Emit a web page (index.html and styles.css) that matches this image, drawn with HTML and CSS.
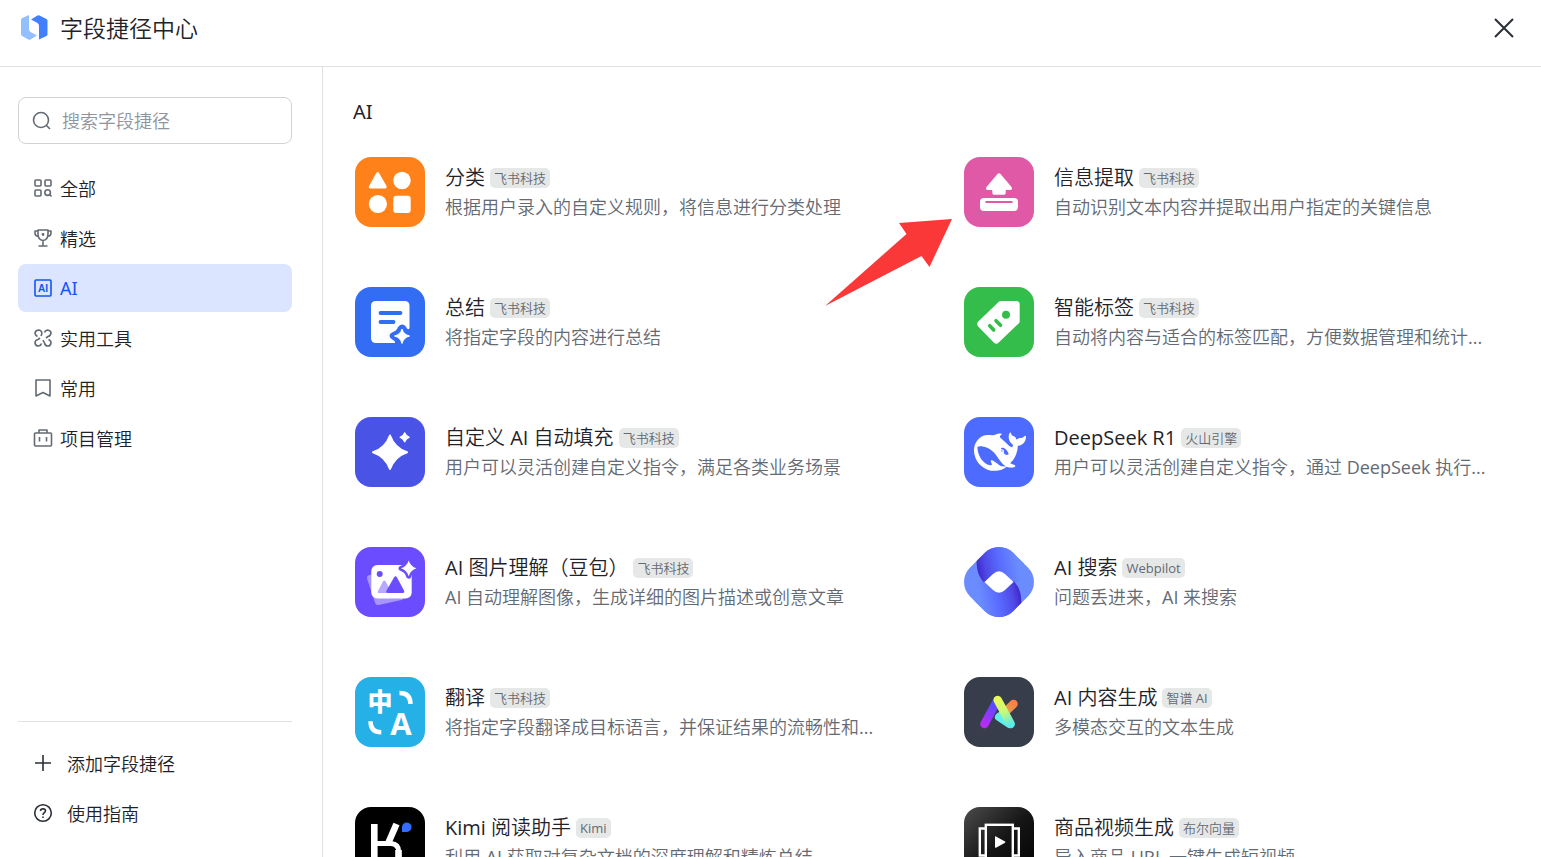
FILE: index.html
```html
<!DOCTYPE html>
<html lang="zh-CN">
<head>
<meta charset="utf-8">
<meta name="viewport" content="width=device-width, initial-scale=1">
<title>字段捷径中心</title>
<link rel="stylesheet" href="styles.css">
</head>
<body>
<div class="app">
  <header class="header">
    <svg class="logo" viewBox="0 0 28 28" aria-hidden="true">
      <path fill="#94bfff" d="M1 6Q1 4.500 2.300 4L9 1V15Q9 17 10.500 18L17 21.500L10.500 25.500Q9.500 26 8.500 25.500L2 22Q1 21.400 1 20Z"/>
      <path fill="#4080ff" d="M11 5.500L17.500 1.500Q18.500 1 19.500 1.500L26.500 5Q27.500 5.600 27.500 7V20Q27.500 21.500 26.500 22L19 25.500V12Q19 10 17.500 9Z"/>
    </svg>
    <h1 class="header-title">字段捷径中心</h1>
    <button class="close" type="button" aria-label="关闭">
      <svg viewBox="0 0 24 24" aria-hidden="true"><path d="M3 3L21 21M21 3L3 21"/></svg>
    </button>
  </header>

  <div class="body">
    <aside class="sidebar">
      <label class="search">
        <svg class="icon" viewBox="0 0 20 20" aria-hidden="true"><circle cx="9" cy="9" r="7.500"/><path d="M14.500 14.500L18 18"/></svg>
        <input class="search-input" type="text" placeholder="搜索字段捷径" aria-label="搜索字段捷径">
      </label>
      <nav class="nav">
        <a class="nav-item" href="#all">
          <svg class="icon" viewBox="0 0 20 20" aria-hidden="true"><rect x="2" y="2" width="6" height="6" rx="1"/><rect x="12" y="2" width="6" height="6" rx="1"/><rect x="2" y="12" width="6" height="6" rx="1"/><circle cx="14.600" cy="14.600" r="2.800"/><path d="M16.600 16.600L18.500 18.500"/></svg>
          全部</a>
        <a class="nav-item" href="#featured">
          <svg class="icon" viewBox="0 0 20 20" aria-hidden="true"><path d="M5 2H15V6Q15 12 10 12.500Q5 12 5 6ZM5 3H2V5Q2 8 5.500 8.500M15 3H18V5Q18 8 14.500 8.500M10 12.500V18M5.500 18H14.500"/><path d="M10 5V8M8.700 6.300H11.300"/></svg>
          精选</a>
        <a class="nav-item nav-item-active" href="#ai" aria-current="page">
          <svg class="icon" viewBox="0 0 20 20" aria-hidden="true"><rect x="2" y="2" width="16" height="16" rx="1"/><text class="icon-letters" x="10" y="14" text-anchor="middle">AI</text></svg>
          AI</a>
        <a class="nav-item" href="#tools">
          <svg class="icon" viewBox="0 0 20 20" aria-hidden="true"><path d="M8 8L9 5.500Q8.500 2 5.300 2Q2 2.500 2 5.500Q2.500 7.500 4.500 8.500M7 10L5 11.500Q2 12 2 15Q2.500 18 5.500 18Q8 17.500 8.500 15.500M11.500 4.500Q12 2.500 14.500 2Q18 2.500 18 5Q17.500 8 15 8.500L13 10M15.500 11.500Q18 12.500 18 15Q17.500 18 15 18Q12 18 11.500 15L10 12"/></svg>
          实用工具</a>
        <a class="nav-item" href="#common">
          <svg class="icon" viewBox="0 0 20 20" aria-hidden="true"><path d="M3 2H17V18L10 14.500L3 18Z"/></svg>
          常用</a>
        <a class="nav-item" href="#projects">
          <svg class="icon" viewBox="0 0 20 20" aria-hidden="true"><rect x="1.500" y="5" width="17" height="13" rx="1"/><path d="M6 5V2H14V5M6.500 9V13.500M13.500 9V13.500"/></svg>
          项目管理</a>
      </nav>
      <div class="sidebar-footer">
        <a class="nav-item nav-item-wide" href="#add">
          <svg class="icon icon-dark" viewBox="0 0 20 20" aria-hidden="true"><path d="M10 2V18M2 10H18"/></svg>
          添加字段捷径</a>
        <a class="nav-item nav-item-wide" href="#guide">
          <svg class="icon icon-dark" viewBox="0 0 20 20" aria-hidden="true"><circle cx="10" cy="10" r="8.300"/><path d="M7.500 8Q7.500 5.700 10 5.700Q12.500 5.800 12.500 8Q12.400 9 11.200 9.800Q10 10.500 10 12"/><path d="M10 13.500V15"/></svg>
          使用指南</a>
      </div>
    </aside>

    <main class="main">
      <h2 class="section-title">AI</h2>
      <div class="grid">
        <article class="card">
          <svg class="app-icon" viewBox="0 0 70 70" aria-hidden="true"><rect width="70" height="70" rx="16" fill="#ff811a"/><g fill="#fff"><path d="M21.300 16Q22.700 14 24.100 16L31.500 29Q32.300 31.300 30 31.500H15.500Q13.200 31.300 14 29Z"/><circle cx="47" cy="23.500" r="8.700"/><circle cx="22.900" cy="47" r="9.100"/><rect x="38.300" y="38.700" width="17.400" height="17.400" rx="3"/></g></svg>
          <div class="card-text"><div class="card-head"><h3 class="card-title">分类</h3><span class="badge">飞书科技</span></div><p class="card-desc">根据用户录入的自定义规则，将信息进行分类处理</p></div>
        </article>

        <article class="card">
          <svg class="app-icon" viewBox="0 0 70 70" aria-hidden="true"><rect width="70" height="70" rx="16" fill="#e059a6"/><path fill="#fff" d="M33.700 16.800Q35 15.500 36.300 16.800L47.500 30Q49 33 46 33H41.700V36Q41.700 37.700 40 37.700H30Q28.300 37.700 28.300 36V33H24Q21 33 22.500 30Z"/><rect x="16" y="41" width="38" height="13" rx="4" fill="#fff"/><path d="M21.500 45H48.500" stroke="#e059a6" stroke-width="2"/></svg>
          <div class="card-text"><div class="card-head"><h3 class="card-title">信息提取</h3><span class="badge">飞书科技</span></div><p class="card-desc">自动识别文本内容并提取出用户指定的关键信息</p></div>
          <svg class="pointer" viewBox="0 0 128 88" aria-hidden="true"><path fill="#fb3838" d="M127 0L74 4L81.500 15L0 87L96.500 37L104.500 48Z"/></svg>
        </article>

        <article class="card">
          <svg class="app-icon" viewBox="0 0 70 70" aria-hidden="true"><rect width="70" height="70" rx="16" fill="#336df4"/><path fill="#fff" d="M21 14H49.500Q54.500 14 54.500 19V41Q54 43 52 41.500Q50 37.500 47 37.500Q43.500 38 42 42Q41 44 38 45Q34.500 46.500 34.500 49Q34.700 51.500 38 53Q40.500 54 40 56H21Q16 56 16 51V19Q16 14 21 14Z"/><path d="M25.500 26H45.500M25.500 35H38.500" stroke="#336df4" stroke-width="3.800" stroke-linecap="round"/><path fill="#fff" stroke="#fff" stroke-linejoin="round" d="M47 42Q48.500 47.500 54.500 49Q48.500 50.500 47 56.500Q45.500 50.500 39.500 49Q45.500 47.500 47 42Z"/></svg>
          <div class="card-text"><div class="card-head"><h3 class="card-title">总结</h3><span class="badge">飞书科技</span></div><p class="card-desc">将指定字段的内容进行总结</p></div>
        </article>

        <article class="card">
          <svg class="app-icon" viewBox="0 0 70 70" aria-hidden="true"><rect width="70" height="70" rx="16" fill="#35bd4b"/><path fill="#fff" stroke="#fff" stroke-width="7" stroke-linejoin="round" d="M37 17.500H52.200V34L32.300 53L16.700 37Z"/><circle cx="42" cy="27.700" r="4" fill="#35bd4b"/><path d="M25.700 38.700L29.700 43M32 33.700L36.500 38.300" stroke="#35bd4b" stroke-width="3.600" stroke-linecap="round"/></svg>
          <div class="card-text"><div class="card-head"><h3 class="card-title">智能标签</h3><span class="badge">飞书科技</span></div><p class="card-desc">自动将内容与适合的标签匹配，方便数据管理和统计...</p></div>
        </article>

        <article class="card">
          <svg class="app-icon" viewBox="0 0 70 70" aria-hidden="true"><rect width="70" height="70" rx="16" fill="#4954e6"/><g fill="#fff" stroke="#fff" stroke-linejoin="round"><path stroke-width="2" d="M35 18.500Q39.500 31 52 35.300Q39.500 39.500 35 52Q30.500 39.500 18 35.300Q30.500 31 35 18.500Z"/><path stroke-width="1" d="M49.700 15.500Q51 19 54.500 20.300Q51 21.600 49.700 25.200Q48.400 21.600 44.800 20.300Q48.400 19 49.700 15.500Z"/></g></svg>
          <div class="card-text"><div class="card-head"><h3 class="card-title">自定义 AI 自动填充</h3><span class="badge">飞书科技</span></div><p class="card-desc">用户可以灵活创建自定义指令，满足各类业务场景</p></div>
        </article>

        <article class="card">
          <svg class="app-icon" viewBox="0 0 70 70" aria-hidden="true"><rect width="70" height="70" rx="16" fill="#4d6bfe"/><path fill="#fff" transform="translate(10 9) scale(2.170)" d="M23.748 4.482c-.254-.124-.364.113-.512.234-.051.039-.094.09-.137.136-.372.397-.806.657-1.373.626-.829-.046-1.537.214-2.163.848-.133-.782-.575-1.248-1.247-1.548-.352-.156-.708-.311-.955-.65-.172-.241-.219-.51-.305-.774-.055-.16-.11-.323-.293-.35-.2-.031-.278.136-.356.276-.313.572-.434 1.202-.422 1.84.027 1.436.633 2.58 1.838 3.393.137.093.172.187.129.323-.082.28-.18.552-.266.833-.055.179-.137.217-.329.14a5.526 5.526 0 01-1.736-1.18c-.857-.828-1.631-1.742-2.597-2.458a11.365 11.365 0 00-.689-.471c-.985-.957.13-1.743.388-1.836.27-.098.093-.432-.779-.428-.872.004-1.67.295-2.687.684a3.055 3.055 0 01-.465.137 9.597 9.597 0 00-2.883-.102c-1.885.21-3.39 1.102-4.497 2.623C.082 8.606-.231 10.684.152 12.85c.403 2.284 1.569 4.175 3.36 5.653 1.858 1.533 3.997 2.284 6.438 2.14 1.482-.085 3.133-.284 4.994-1.86.47.234.962.327 1.78.397.63.059 1.236-.03 1.705-.128.735-.156.684-.837.419-.961-2.155-1.004-1.682-.595-2.113-.926 1.096-1.296 2.746-2.642 3.392-7.003.05-.347.007-.565 0-.845-.004-.17.035-.237.23-.256a4.173 4.173 0 001.545-.475c1.396-.763 1.96-2.015 2.093-3.517.02-.23-.004-.467-.247-.588zM11.581 18c-2.089-1.642-3.102-2.183-3.52-2.16-.392.024-.321.471-.235.763.09.288.207.486.371.739.114.167.192.416-.113.603-.673.416-1.842-.14-1.897-.167-1.361-.802-2.5-1.86-3.301-3.307-.774-1.393-1.224-2.887-1.298-4.482-.02-.386.093-.522.477-.592a4.696 4.696 0 011.529-.039c2.132.312 3.946 1.265 5.468 2.774.868.86 1.525 1.887 2.202 2.891.72 1.066 1.494 2.082 2.48 2.914.348.292.625.514.891.677-.802.09-2.14.11-3.054-.614zm1-6.44a.306.306 0 01.415-.287.302.302 0 01.2.288.306.306 0 01-.31.307.303.303 0 01-.304-.308zm3.11 1.596c-.2.081-.399.151-.59.16a1.245 1.245 0 01-.798-.254c-.274-.23-.47-.358-.552-.758a1.73 1.73 0 01.016-.588c.07-.327-.008-.537-.239-.727-.187-.156-.426-.199-.688-.199a.559.559 0 01-.254-.078c-.11-.054-.2-.19-.114-.358.028-.054.16-.186.192-.21.356-.202.767-.136 1.146.016.352.144.618.408 1.001.782.391.451.462.576.685.914.176.265.336.537.445.848.067.195-.019.354-.25.452z"/></svg>
          <div class="card-text"><div class="card-head"><h3 class="card-title">DeepSeek R1</h3><span class="badge">火山引擎</span></div><p class="card-desc">用户可以灵活创建自定义指令，通过 DeepSeek 执行...</p></div>
        </article>

        <article class="card">
          <svg class="app-icon" viewBox="0 0 70 70" aria-hidden="true"><rect width="70" height="70" rx="16" fill="#6b4dff"/><path fill="#a894ff" stroke="#a894ff" stroke-width="6" stroke-linejoin="round" d="M15 31L23 55L46 50L40 26Z"/><rect x="16.300" y="18" width="40.400" height="33.500" rx="6" fill="#fff"/><rect x="21" y="22.500" width="31" height="24" rx="2" fill="#fff"/><circle cx="24.700" cy="27" r="3" fill="#6b4dff"/><path fill="#b8a8ff" d="M23 44L28 34.500Q29.300 32.500 30.600 34.500L37 46H24Q22 46 23 44Z"/><path fill="#6b4dff" d="M31.500 43.500L39 30.500Q40.500 28 42 30.500L49 43.500Q50 46 47.500 46H33Q30.500 46 31.500 43.500Z"/><path fill="#fff" stroke="#6b4dff" stroke-width="5" stroke-linejoin="round" paint-order="stroke" d="M53.700 13.500Q55.500 19.500 61.500 21.300Q55.500 23.100 53.700 29.200Q51.900 23.100 46 21.300Q51.900 19.500 53.700 13.500Z"/></svg>
          <div class="card-text"><div class="card-head"><h3 class="card-title">AI 图片理解（豆包）</h3><span class="badge">飞书科技</span></div><p class="card-desc">AI 自动理解图像，生成详细的图片描述或创意文章</p></div>
        </article>

        <article class="card">
          <svg class="app-icon" viewBox="0 0 70 70" aria-hidden="true"><defs><linearGradient id="swirl" gradientUnits="userSpaceOnUse" x1="12" y1="26" x2="54" y2="18"><stop offset="0" stop-color="#3d1fc4"/><stop offset=".25" stop-color="#4f4be8"/><stop offset=".6" stop-color="#5a6cff"/><stop offset="1" stop-color="#6a8cff"/></linearGradient><clipPath id="diamond"><rect x="4.400" y="4.400" width="61.200" height="61.200" rx="20" transform="rotate(45 35 35)"/></clipPath></defs><g clip-path="url(#diamond)"><rect width="70" height="70" fill="#6a8cff"/><path id="swirl-half" fill="url(#swirl)" d="M12.700 10C12 24 15 30 20.300 36L49.500 35L60 35L60 0H12.700Z"/><use href="#swirl-half" transform="rotate(180 35 35)"/><path fill="#fff" d="M20.500 35L29 27Q35 21.500 41 27L49.500 35L41 43Q35 48.500 29 43Z"/></g></svg>
          <div class="card-text"><div class="card-head"><h3 class="card-title">AI 搜索</h3><span class="badge">Webpilot</span></div><p class="card-desc">问题丢进来，AI 来搜索</p></div>
        </article>

        <article class="card">
          <svg class="app-icon" viewBox="0 0 70 70" aria-hidden="true"><rect width="70" height="70" rx="16" fill="#26b0e8"/><text class="glyph-cjk" x="25" y="34" text-anchor="middle">中</text><text class="glyph-latin" x="46" y="58" text-anchor="middle">A</text><path fill="none" stroke="#fff" stroke-width="4.500" d="M44.500 16Q55.500 16 55.500 27M15.500 44.300Q15.500 55.300 26.300 55.300"/></svg>
          <div class="card-text"><div class="card-head"><h3 class="card-title">翻译</h3><span class="badge">飞书科技</span></div><p class="card-desc">将指定字段翻译成目标语言，并保证结果的流畅性和...</p></div>
        </article>

        <article class="card">
          <svg class="app-icon" viewBox="0 0 70 70" aria-hidden="true"><defs><linearGradient id="bar-violet" gradientUnits="userSpaceOnUse" x1="21" y1="47" x2="34" y2="22"><stop offset="0" stop-color="#b52cf5"/><stop offset="1" stop-color="#3a55ff"/></linearGradient><linearGradient id="bar-orange" gradientUnits="userSpaceOnUse" x1="50" y1="26" x2="36" y2="40"><stop offset="0" stop-color="#ff7f45"/><stop offset=".6" stop-color="#e0a050"/><stop offset="1" stop-color="#62e8ee"/></linearGradient><linearGradient id="bar-lime" gradientUnits="userSpaceOnUse" x1="34" y1="22" x2="47" y2="48"><stop offset="0" stop-color="#e8fb5a"/><stop offset=".5" stop-color="#c9f77c"/><stop offset="1" stop-color="#55ecec"/></linearGradient></defs><rect width="70" height="70" rx="16" fill="#373d4a"/><g fill="none" stroke-width="8.500" stroke-linecap="round"><path stroke="url(#bar-violet)" d="M20.500 47L33 24"/><path stroke="url(#bar-orange)" d="M49.500 27L37 39"/></g><path fill="#5ff0ee" d="M31 39Q32 36 36 35L48 50Q46 52 43.500 50.500L33 43.500Q30 41.500 31 39Z"/><path fill="none" stroke="url(#bar-lime)" stroke-width="8.500" stroke-linecap="round" d="M33.700 23L46.700 47"/></svg>
          <div class="card-text"><div class="card-head"><h3 class="card-title">AI 内容生成</h3><span class="badge">智谱 AI</span></div><p class="card-desc">多模态交互的文本生成</p></div>
        </article>

        <article class="card">
          <svg class="app-icon" viewBox="0 0 70 70" aria-hidden="true"><rect width="70" height="70" rx="16" fill="#000"/><g fill="none" stroke="#fff" stroke-width="6.600"><path d="M19.300 17V58"/><path d="M41.500 17L33.500 35.500"/><path stroke-width="5" d="M20 36.500H36Q43.800 37 43.800 45V58"/><path d="M43.500 43V58"/></g><path fill="#336dff" d="M47 25V20A4.800 4.800 0 1 1 51.800 25Z"/></svg>
          <div class="card-text"><div class="card-head"><h3 class="card-title">Kimi 阅读助手</h3><span class="badge">Kimi</span></div><p class="card-desc">利用 AI 获取对复杂文档的深度理解和精炼总结</p></div>
        </article>

        <article class="card">
          <svg class="app-icon" viewBox="0 0 70 70" aria-hidden="true"><defs><linearGradient id="film" x1="0" y1="0" x2="1" y2="1"><stop offset="0" stop-color="#4c4c4e"/><stop offset=".5" stop-color="#161616"/><stop offset="1" stop-color="#000"/></linearGradient></defs><rect width="70" height="70" rx="16" fill="url(#film)"/><g fill="none" stroke="#fff" stroke-width="2.400"><rect x="21.800" y="17.800" width="27" height="34.500"/><path d="M21.800 21.500H15.800V48.500H21.800M48.800 21.500H54.800V48.500H48.800"/></g><path fill="#fff" d="M31 30Q31 29 32 29.500L41 34.500Q42 35 41 35.700L32 40.700Q31 41 31 40Z"/></svg>
          <div class="card-text"><div class="card-head"><h3 class="card-title">商品视频生成</h3><span class="badge">布尔向量</span></div><p class="card-desc">导入商品 URL 一键生成短视频</p></div>
        </article>
      </div>
    </main>
  </div>
</div>
</body>
</html>
```

FILE: styles.css
```css
* {
  box-sizing: border-box;
}

body {
  margin: 0;
  background: #fff;
  color: #1f2329;
  font-family: "Open Sans", "Noto Sans CJK SC DemiLight", "Noto Sans CJK SC", sans-serif;
  font-size: 18px;
  font-weight: 400;
}

h1,
h2,
h3,
p {
  margin: 0;
  font-weight: 400;
}

svg {
  display: block;
  flex: none;
}

.app {
  display: flex;
  flex-direction: column;
  height: 100vh;
}

.header {
  display: flex;
  align-items: center;
  gap: 12px;
  padding: 11px 25px 21px 20px;
  border-bottom: 1px solid #dee0e3;
}

.logo {
  width: 28px;
  height: 28px;
}

.header-title {
  flex: 1;
  font-size: 23px;
  line-height: 34px;
}

.close {
  padding: 0;
  border: 0;
  background: none;
  cursor: pointer;
}

.close svg {
  width: 24px;
  height: 24px;
  fill: none;
  stroke: #2b2f36;
  stroke-width: 2;
}

.body {
  display: flex;
  flex: 1;
  min-height: 0;
}

.sidebar {
  display: flex;
  flex: none;
  flex-direction: column;
  width: 323px;
  padding: 30px 30px 20px 18px;
  border-right: 1px solid #dee0e3;
}

.search {
  display: flex;
  align-items: center;
  gap: 10px;
  padding: 0 13px;
  border: 1px solid #d0d3d6;
  border-radius: 8px;
}

.search-input {
  flex: 1;
  min-width: 0;
  height: 45px;
  padding: 0;
  border: 0;
  outline: 0;
  background: none;
  color: inherit;
  font: inherit;
}

.search-input::placeholder {
  color: #8f959e;
  opacity: 1;
}

.icon {
  width: 20px;
  height: 20px;
  fill: none;
  stroke: #646a73;
  stroke-width: 1.600;
  stroke-linejoin: round;
}

.icon-dark {
  stroke: #2b2f36;
}

.icon-letters {
  fill: #1456f0;
  stroke: none;
  font-family: "Liberation Sans", sans-serif;
  font-size: 10px;
  font-weight: 700;
}

.nav {
  display: flex;
  flex: 1;
  flex-direction: column;
  gap: 2px;
  margin-top: 20px;
}

.nav-item {
  display: flex;
  align-items: center;
  gap: 7px;
  height: 48px;
  padding: 0 15px;
  border-radius: 8px;
  color: #1f2329;
  text-decoration: none;
}

.nav-item-wide {
  gap: 14px;
}

.nav-item-active {
  background: #dbe5ff;
  color: #1456f0;
  font-family: "Noto Sans", sans-serif;
}

.nav-item-active .icon {
  stroke: #1456f0;
}

.sidebar-footer {
  display: flex;
  flex-direction: column;
  gap: 2px;
  padding-top: 17px;
  border-top: 1px solid #dee0e3;
}

.main {
  flex: 1;
  min-width: 0;
  overflow-y: auto;
  scrollbar-width: none;
}

.section-title {
  padding: 30px 30px 0;
  font-family: "Noto Sans", sans-serif;
  font-size: 20px;
  line-height: 30px;
}

.grid {
  display: grid;
  grid-template-columns: 1fr 1fr;
  row-gap: 60px;
  padding: 30px 0;
}

.card {
  position: relative;
  display: flex;
  gap: 20px;
  min-width: 0;
  padding: 0 32px;
}

.app-icon {
  width: 70px;
  height: 70px;
}

.card-text {
  flex: 1;
  min-width: 0;
  padding-top: 6px;
}

.card-head {
  display: flex;
  align-items: center;
  gap: 5px;
}

.card-title {
  font-size: 20px;
  line-height: 30px;
}

.badge {
  padding: 0 4px;
  border-radius: 5px;
  background: #e6e8e8;
  color: #646a73;
  font-size: 13px;
  line-height: 20px;
}

.card-desc {
  overflow: hidden;
  color: #646a73;
  line-height: 28px;
  text-overflow: ellipsis;
  white-space: nowrap;
}

.pointer {
  position: absolute;
  top: 62px;
  left: -107px;
  width: 128px;
  height: 88px;
}

.glyph-cjk {
  fill: #fff;
  font-family: "Noto Sans CJK SC", sans-serif;
  font-size: 25px;
  font-weight: 900;
}

.glyph-latin {
  fill: #fff;
  font-size: 31px;
  font-weight: 700;
}
```
